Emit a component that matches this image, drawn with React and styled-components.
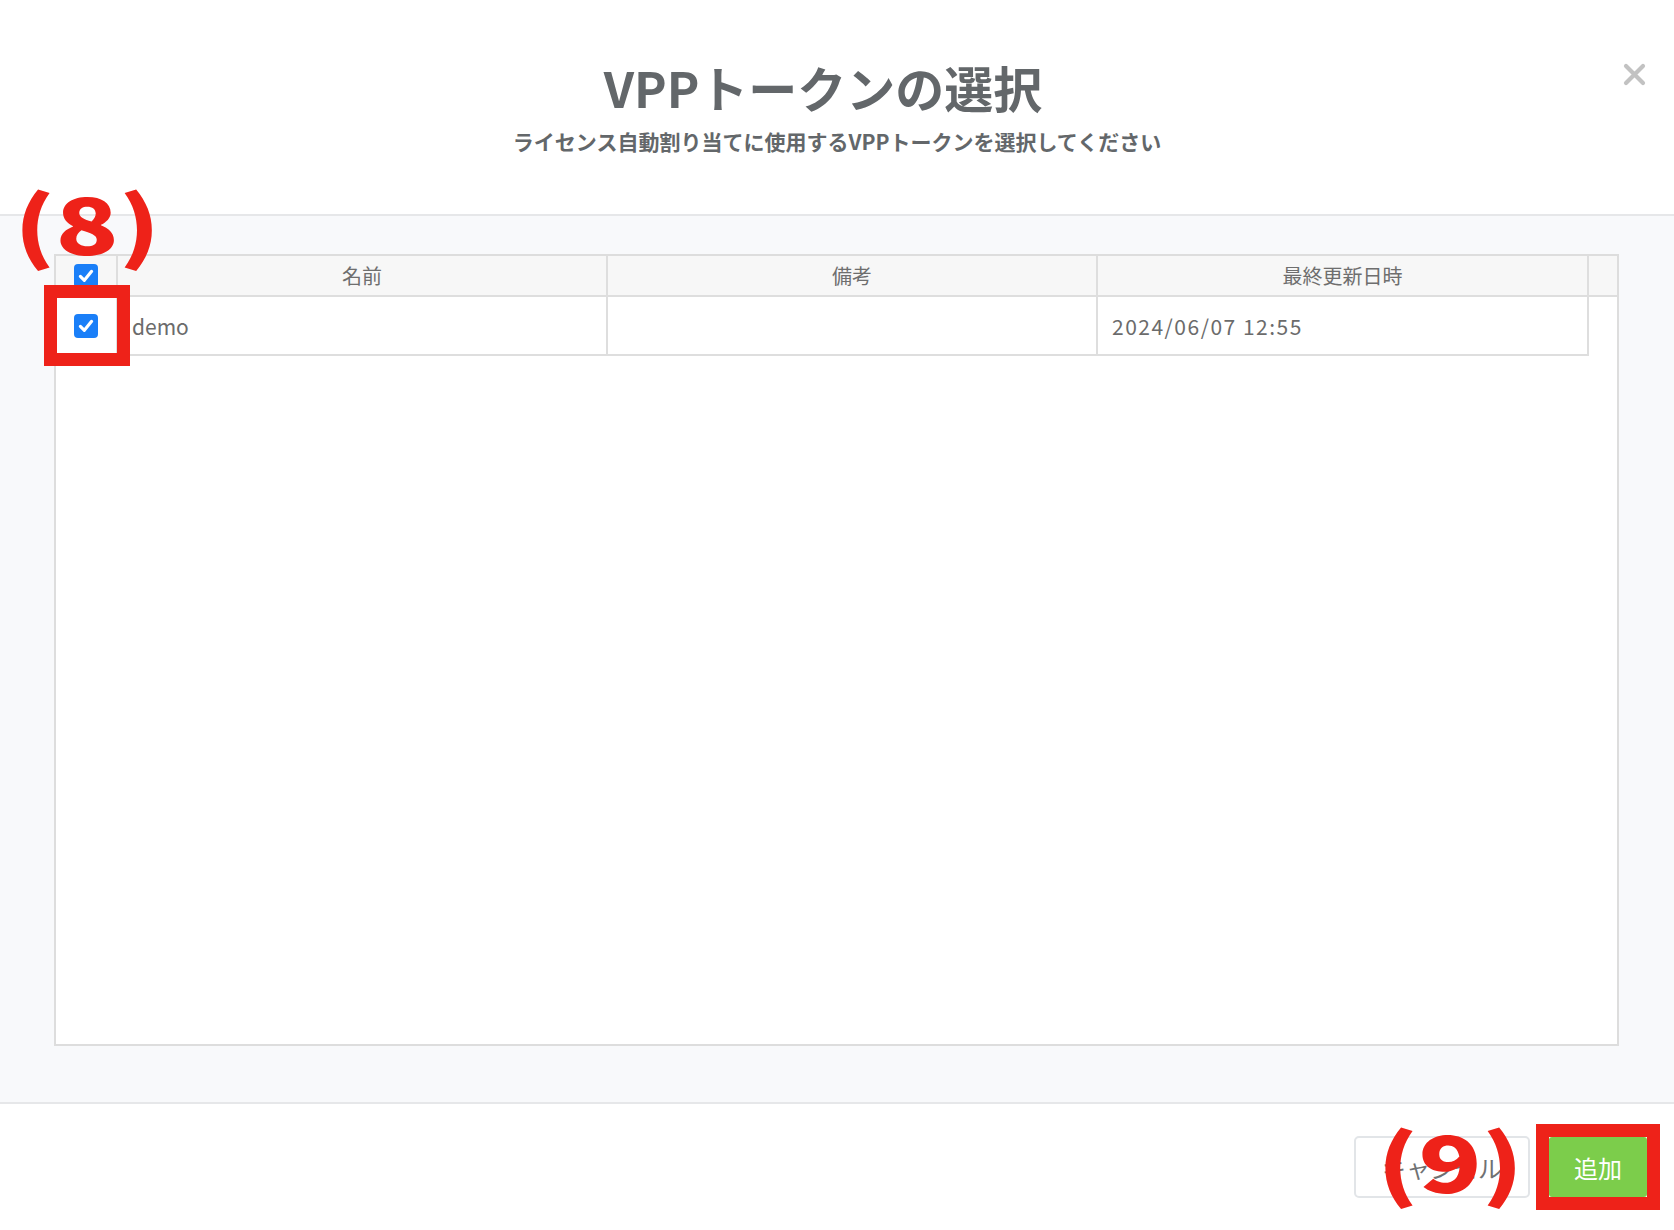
import React from 'react';
import styled, { createGlobalStyle } from 'styled-components';

const GlobalStyle = createGlobalStyle`
  html, body {
    margin: 0;
    padding: 0;
    background: #fff;
  }
  body {
    font-family: "Noto Sans CJK JP", "Noto Sans", sans-serif;
  }
  * {
    box-sizing: border-box;
  }
`;

const Modal = styled.div`
  position: relative;
  width: 1674px;
  height: 1230px;
  display: flex;
  flex-direction: column;
  background: #fff;
  overflow: hidden;
`;

const Header = styled.header`
  position: relative;
  height: 214px;
  padding-top: 58px;
  text-align: center;
  color: #63676a;
`;

const Title = styled.h1`
  margin: 0;
  padding-right: 28px;
  font-size: 49px;
  line-height: 1.2;
  font-weight: 700;
`;

const Subtitle = styled.p`
  margin: 10px 0 0;
  font-size: 21px;
  line-height: 1.4;
  font-weight: 700;
`;

const CloseButton = styled.button`
  position: absolute;
  top: 63px;
  right: 28px;
  width: 23px;
  height: 23px;
  padding: 0;
  border: none;
  background: none;
  cursor: pointer;
  svg {
    display: block;
  }
`;

const Body = styled.section`
  flex: 1;
  background: #f8f9fb;
  border-top: 2px solid #e6e7e9;
  border-bottom: 2px solid #e6e7e9;
  padding: 38px 55px 0 54px;
`;

const TableBox = styled.div`
  height: 792px;
  background: #fff;
  border: 2px solid #dddddd;
`;

const HeadRow = styled.div`
  display: grid;
  grid-template-columns: 62px 490px 490px 491px 1fr;
  height: 41px;
  background: #f7f7f7;
  border-bottom: 2px solid #dedede;
`;

const DataRow = styled.div`
  display: grid;
  grid-template-columns: 62px 490px 490px 491px;
  width: 1533px;
  height: 59px;
  border-bottom: 2px solid #dedede;
`;

const HeadCell = styled.div`
  display: flex;
  align-items: center;
  justify-content: center;
  border-right: ${(p) => (p.$last ? 'none' : '2px solid #dedede')};
  font-size: 20px;
  color: #6e6e6e;
`;

const Cell = styled.div`
  display: flex;
  align-items: center;
  justify-content: ${(p) => (p.$center ? 'center' : 'flex-start')};
  padding-left: ${(p) => (p.$center ? '0' : '14px')};
  border-right: 2px solid #dedede;
  font-size: 21px;
  color: #6b6b6b;
  letter-spacing: ${(p) => (p.$wide ? '1.5px' : '0')};
  outline: ${(p) => (p.$marked ? '13px solid #ee2219' : 'none')};
  outline-offset: -1px;
`;

const Box = styled.span`
  display: inline-flex;
  align-items: center;
  justify-content: center;
  width: 24px;
  height: 24px;
  border-radius: 4px;
  background: #1a7ff8;
`;

const Footer = styled.footer`
  height: 126px;
  display: flex;
  align-items: center;
  justify-content: flex-end;
  gap: 19px;
  padding: 0 27px 0 0;
`;

const Button = styled.button`
  height: 62px;
  padding: 0 26px;
  font-family: inherit;
  font-size: 24px;
  border-radius: 5px;
  cursor: pointer;
  border: 2px solid #e2e5e8;
  background: #fff;
  color: #6f7173;
`;

const AddButton = styled(Button)`
  height: 60px;
  padding: 0 25px;
  border: none;
  border-radius: 3px;
  background: #7ccd4b;
  color: #fff;
`;

const Frame = styled.span`
  display: inline-flex;
  margin: -13px;
  border: 13px solid #ee2219;
`;

const Marker = styled.span`
  position: absolute;
  left: ${(p) => p.$x}px;
  top: ${(p) => p.$y}px;
  font-size: 78px;
  line-height: 1;
  font-weight: 900;
  color: #ee2219;
  transform: scaleX(1.33);
  transform-origin: left top;
  pointer-events: none;
  white-space: nowrap;
`;

const Check = () => (
  <Box>
    <svg width="18" height="18" viewBox="0 0 24 24">
      <path d="M4.5 12.5 L9.8 17.8 L19.5 5.8" fill="none" stroke="#fff" strokeWidth="4.2" strokeLinecap="round" strokeLinejoin="round" />
    </svg>
  </Box>
);

const tokens = [{ name: 'demo', note: '', updated: '2024/06/07 12:55' }];

export default function App() {
  return (
    <>
      <GlobalStyle />
      <Modal>
        <Header>
          <Title>VPPトークンの選択</Title>
          <Subtitle>ライセンス自動割り当てに使用するVPPトークンを選択してください</Subtitle>
          <CloseButton aria-label="close">
            <svg width="23" height="23" viewBox="0 0 23 23">
              <path d="M3 3 L20 20 M20 3 L3 20" stroke="#c2c2c2" strokeWidth="4.2" strokeLinecap="round" />
            </svg>
          </CloseButton>
        </Header>

        <Body>
          <TableBox>
            <HeadRow>
              <HeadCell><Check /></HeadCell>
              <HeadCell>名前</HeadCell>
              <HeadCell>備考</HeadCell>
              <HeadCell>最終更新日時</HeadCell>
              <HeadCell $last />
            </HeadRow>
            {tokens.map((t) => (
              <DataRow key={t.name}>
                <Cell $center $marked><Check /></Cell>
                <Cell>{t.name}</Cell>
                <Cell>{t.note}</Cell>
                <Cell $wide>{t.updated}</Cell>
              </DataRow>
            ))}
          </TableBox>
        </Body>

        <Footer>
          <Button>キャンセル</Button>
          <Frame>
            <AddButton>追加</AddButton>
          </Frame>
        </Footer>

        <Marker $x={14} $y={182}>(8)</Marker>
        <Marker $x={1377} $y={1120}>(9)</Marker>
      </Modal>
    </>
  );
}
